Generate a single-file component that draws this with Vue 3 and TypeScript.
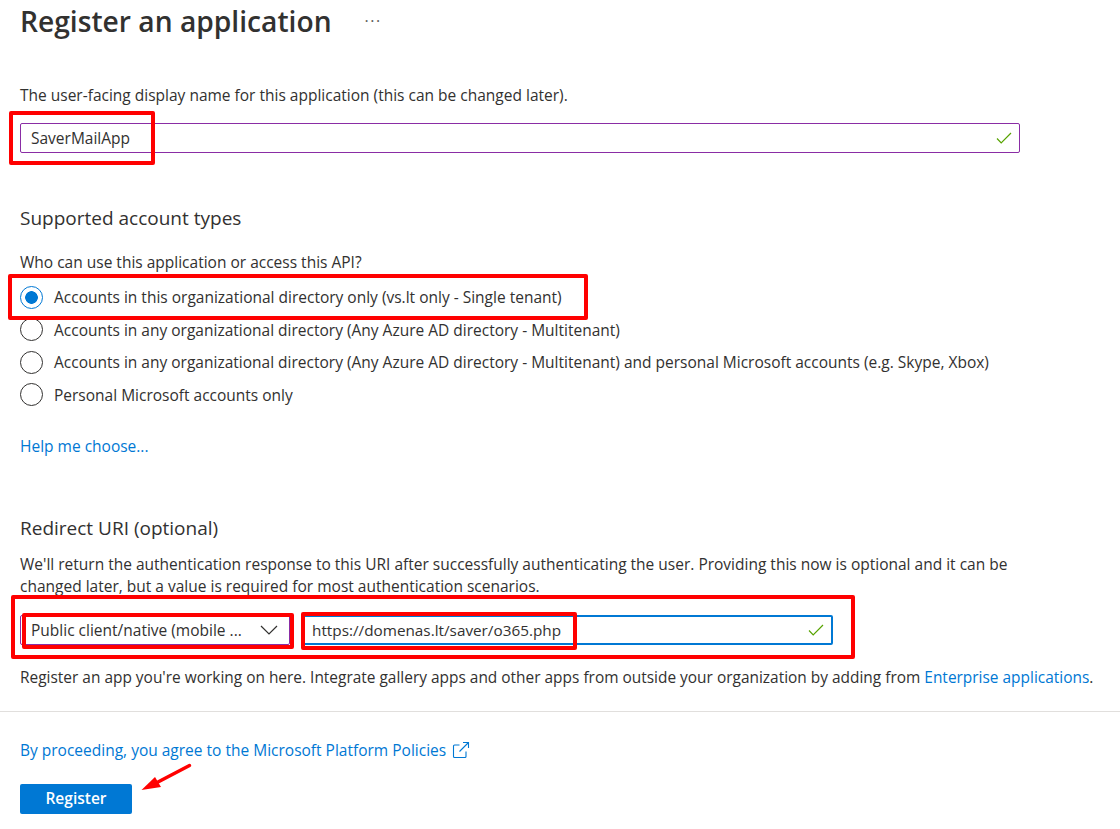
<script setup lang="ts">
const accountTypes: string[] = [
  'Accounts in this organizational directory only (vs.lt only - Single tenant)',
  'Accounts in any organizational directory (Any Azure AD directory - Multitenant)',
  'Accounts in any organizational directory (Any Azure AD directory - Multitenant) and personal Microsoft accounts (e.g. Skype, Xbox)',
  'Personal Microsoft accounts only',
]
</script>

<template>
  <div class="page">
    <header class="title-row">
      <h1>Register an application</h1>
      <span class="more">···</span>
    </header>

    <section class="main">
      <p class="name-label">The user-facing display name for this application (this can be changed later).</p>
      <div class="field name-field">
        <span>SaverMailApp</span>
        <svg class="check" viewBox="0 0 16 12" width="16" height="12"><path d="M1 6.5 5.2 10.8 15 1" fill="none" stroke="#57a300" stroke-width="1.2" /></svg>
      </div>

      <h2 class="accounts-heading">Supported account types</h2>
      <p class="who">Who can use this application or access this API?</p>
      <div class="radios">
        <div v-for="(t, i) in accountTypes" :key="t" class="radio-row">
          <span class="radio" :class="{ on: i === 0 }"></span>
          <span>{{ t }}</span>
        </div>
      </div>
      <a class="link help">Help me choose...</a>

      <h2 class="redirect-heading">Redirect URI (optional)</h2>
      <p class="desc">We'll return the authentication response to this URI after successfully authenticating the user. Providing this now is optional and it can be changed later, but a value is required for most authentication scenarios.</p>
      <div class="uri-row">
        <div class="field select-field">
          <span>Public client/native (mobile ...</span>
          <svg viewBox="0 0 18 10" width="18" height="10"><path d="M1 1 9 9 17 1" fill="none" stroke="#323130" stroke-width="1.2" /></svg>
        </div>
        <div class="field uri-field">
          <span>https://domenas.lt/saver/o365.php</span>
          <svg class="check" viewBox="0 0 16 12" width="16" height="12"><path d="M1 6.5 5.2 10.8 15 1" fill="none" stroke="#57a300" stroke-width="1.2" /></svg>
        </div>
      </div>
      <p class="gallery">Register an app you're working on here. Integrate gallery apps and other apps from outside your organization by adding from <a class="link">Enterprise applications</a>.</p>
    </section>

    <footer class="foot">
      <a class="link policy">By proceeding, you agree to the Microsoft Platform Policies
        <svg viewBox="0 0 18 18" width="18" height="18"><path d="M7.5 4H2.5A1 1 0 0 0 1.5 5V15.5A1 1 0 0 0 2.5 16.5H13A1 1 0 0 0 14 15.5V10.5M7.5 10.5 16.5 1.5M11 1.5H16.5V7" fill="none" stroke="#0078d4" stroke-width="1.1" /></svg>
      </a>
      <button class="register">Register</button>
    </footer>

    <span class="mark m-name"></span>
    <span class="mark m-radio"></span>
    <span class="mark m-row"></span>
    <span class="mark m-select"></span>
    <span class="mark m-uri"></span>
    <svg class="arrow" viewBox="0 0 52 30" width="52" height="30"><path d="M48.5 2.5 17 19" stroke="#f00" stroke-width="3.5" stroke-linecap="round" /><path d="M0.5 27 14 14 20 24Z" fill="#f00" /></svg>
  </div>
</template>

<style>
html, body { margin: 0; background: #fff; }
</style>

<style scoped>
.page {
  position: relative;
  width: 1120px;
  height: 829px;
  overflow: hidden;
  font-family: "Open Sans", "Noto Sans", sans-serif;
  font-size: 15.5px;
  line-height: 20px;
  color: #323130;
}
p, h1, h2 { margin: 0; font-weight: 400; }
.title-row { display: flex; align-items: center; gap: 33px; padding: 0 0 0 20px; height: 41px; box-sizing: border-box; }
h1 { font-size: 28.2px; line-height: 40px; font-weight: 600; color: #323130; }
.more { font-size: 16px; letter-spacing: 1.5px; color: #605e5c; }
.main { padding: 44px 20px 0; }
.name-label { height: 20px; }
.field { display: flex; align-items: center; justify-content: space-between; height: 30px; box-sizing: border-box; padding: 0 14px 0 10px; border-radius: 2px; background: #fff; }
.name-field { width: 1000px; margin-top: 18px; border: 1px solid #8a2da5; padding-right: 7px; }
.accounts-heading { margin-top: 53px; font-size: 19px; line-height: 24px; }
.who { margin-top: 22px; }
.radios { display: flex; flex-direction: column; margin-top: 15px; gap: 12.67px; }
.radio-row { display: flex; align-items: center; gap: 11px; height: 20px; }
.radio { width: 23px; height: 23px; box-sizing: border-box; border: 1px solid #323130; border-radius: 50%; flex: none; margin: -2px 0; }
.radio.on { border-color: #0078d4; background: radial-gradient(circle, #0078d4 0 6px, #fff 6.6px); }
.link { color: #0078d4; }
.help { display: block; margin-top: 31px; }
.redirect-heading { margin-top: 60px; font-size: 19px; line-height: 24px; }
.desc { margin-top: 13px; width: 1000px; line-height: 22px; }
.uri-row { display: flex; gap: 12px; margin-top: 18px; }
.select-field { width: 270px; border: 1px solid #8a2da5; padding-right: 11px; }
.uri-field { width: 531px; border: 2px solid #0078d4; padding: 0 7px 0 8px; font-size: 15.3px; }
.gallery { margin-top: 22px; width: 1090px; white-space: nowrap; font-size: 15.45px; }
.foot { margin-top: 24px; border-top: 1px solid #e1dfdd; padding: 28px 20px 0; }
.policy { display: flex; align-items: center; gap: 6px; }
.register { display: block; margin-top: 24px; width: 112px; height: 30px; padding: 0 0 2px; border: 0; border-radius: 2px; background: #0078d4; color: #fff; font: 600 15.5px "Open Sans", sans-serif; }
.mark { position: absolute; border: 4px solid #f00; border-radius: 2px; box-sizing: border-box; }
.m-name { left: 9px; top: 111px; width: 146px; height: 54px; }
.m-radio { left: 8px; top: 274px; width: 580px; height: 46px; }
.m-row { left: 11px; top: 595px; width: 844px; height: 64px; }
.m-select { left: 22px; top: 613px; width: 272px; height: 36px; }
.m-uri { left: 301px; top: 612px; width: 276px; height: 38px; }
.arrow { position: absolute; left: 141px; top: 763px; }
</style>
